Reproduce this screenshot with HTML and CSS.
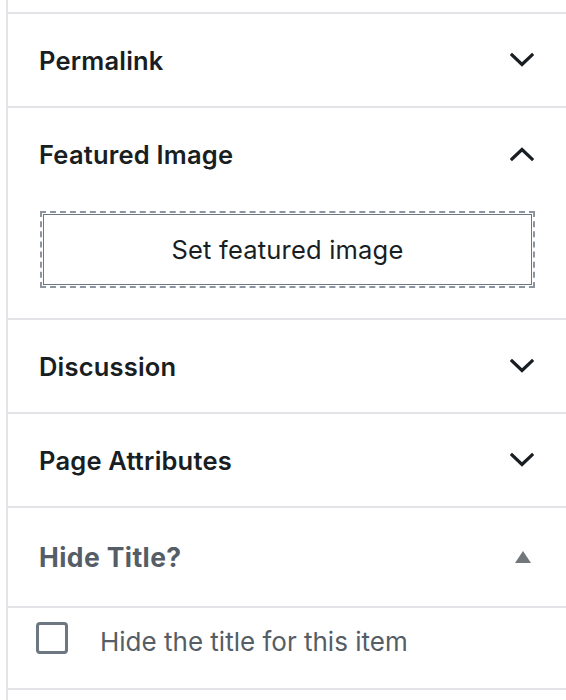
FILE: index.html
```html
<!DOCTYPE html>
<html lang="en">
<head>
    <meta charset="UTF-8">
    <meta name="viewport" content="width=device-width, initial-scale=1.0">
    <title>Document settings</title>
    <link rel="stylesheet" href="styles.css">
</head>
<body>
    <div class="sidebar">
        <div class="panel">
            <div class="panel-head">
                <span>Permalink</span>
                <svg class="chev" width="24" height="16" viewBox="0 0 24 16"><path d="M2 3 L12 12.5 L22 3"/></svg>
            </div>
        </div>
        <div class="panel">
            <div class="panel-head">
                <span>Featured Image</span>
                <svg class="chev" width="24" height="16" viewBox="0 0 24 16"><path d="M2 13 L12 3.5 L22 13"/></svg>
            </div>
            <div class="panel-body">
                <button class="set-image">Set featured image</button>
            </div>
        </div>
        <div class="panel">
            <div class="panel-head">
                <span>Discussion</span>
                <svg class="chev" width="24" height="16" viewBox="0 0 24 16"><path d="M2 3 L12 12.5 L22 3"/></svg>
            </div>
        </div>
        <div class="panel">
            <div class="panel-head">
                <span>Page Attributes</span>
                <svg class="chev" width="24" height="16" viewBox="0 0 24 16"><path d="M2 3 L12 12.5 L22 3"/></svg>
            </div>
        </div>
        <div class="panel">
            <div class="panel-head meta-head">
                <span>Hide Title?</span>
                <span class="tri"></span>
            </div>
        </div>
        <div class="panel">
            <label class="meta-row">
                <span class="check"></span>
                <span class="check-label">Hide the title for this item</span>
            </label>
        </div>
        <div class="panel end"></div>
    </div>
</body>
</html>
```

FILE: styles.css
```css
*{
    margin: 0;
    padding: 0;
    box-sizing: border-box;
}
body{
    background: #fff;
    font-family: Inter, "Liberation Sans", sans-serif;
    color: #191e23;
}
.sidebar{
    margin-left: 6px;
    padding-top: 12px;
    border-left: 2px solid #e2e4e7;
    min-height: 700px;
}
.panel{
    border-top: 2px solid #e2e4e7;
}
.panel-head{
    height: 92px;
    display: flex;
    align-items: center;
    justify-content: space-between;
    padding: 0 32px 0 31px;
    font-size: 25.5px;
    font-weight: 600;
    letter-spacing: 0.2px;
}
.chev path{
    fill: none;
    stroke: #191e23;
    stroke-width: 3.2;
    stroke-linecap: square;
}
.panel-body{
    padding: 14px 34px 33px 35px;
}
.set-image{
    display: block;
    width: 100%;
    height: 71px;
    background: #fff;
    border: 1px solid #6c7781;
    outline: 2px dashed #8d96a0;
    outline-offset: 1px;
    font-family: Inter, "Liberation Sans", sans-serif;
    font-size: 25.5px;
    color: #191e23;
    letter-spacing: 0.2px;
}
.meta-head{
    height: 98px;
    color: #555d66;
    font-size: 26.5px;
    font-weight: 700;
    letter-spacing: 0.4px;
    padding-right: 35px;
}
.tri{
    width: 0;
    height: 0;
    border-left: 8px solid transparent;
    border-right: 8px solid transparent;
    border-bottom: 12px solid #72777c;
}
.meta-row{
    height: 80px;
    display: flex;
    align-items: flex-start;
    padding: 14px 0 0 28px;
    gap: 32px;
    font-size: 26px;
    color: #555d66;
}
.check{
    width: 32px;
    height: 32px;
    border: 3px solid #6c7781;
    border-radius: 4px;
}
.check-label{
    line-height: 32px;
    margin-top: 4px;
}
```
